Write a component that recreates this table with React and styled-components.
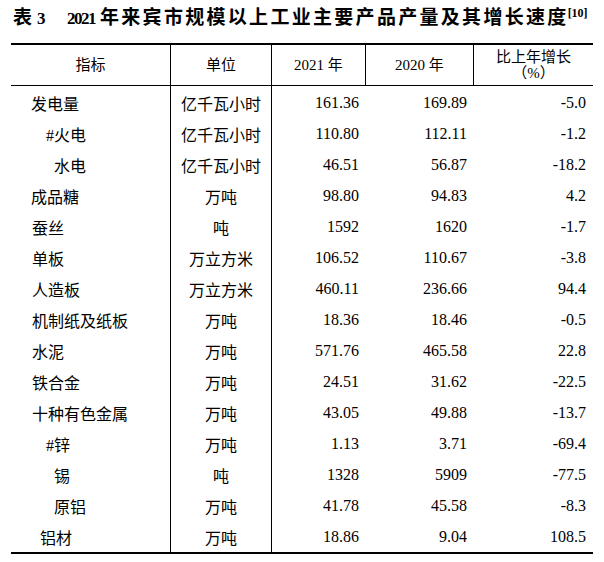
import React from 'react'
import styled, { createGlobalStyle } from 'styled-components'

const GlobalStyle = createGlobalStyle`
  body {
    margin: 0;
    background: #fff;
    color: #000;
  }
`

const COLS = '160px 101px 94px 108px 119px'
const FONT = `"Liberation Serif", "Noto Sans CJK SC", serif`

const Page = styled.div`
  width: 604px;
  height: 562px;
  font-family: ${FONT};
`

const Title = styled.div`
  height: 43px;
  box-sizing: border-box;
  padding: 7px 0 0 13px;
  display: flex;
  align-items: baseline;
  font-weight: bold;
  white-space: nowrap;
  line-height: 22px;
`

const TitleWord = styled.span`
  font-size: 19px;
  letter-spacing: ${p => p.$spacing || 0}px;
  margin-left: ${p => p.$gap || 0}px;
`

const TitleNum = styled.span`
  font-size: 17px;
  letter-spacing: -1.5px;
  margin-left: ${p => p.$gap || 0}px;
`

const Sup = styled.span`
  font-size: 12px;
  position: relative;
  top: -7px;
  margin-left: -1px;
`

const Table = styled.div`
  margin-left: 11px;
  width: 582px;
  border-top: 2px solid #000;
  border-bottom: 2px solid #000;
`

const HeadRow = styled.div`
  display: grid;
  grid-template-columns: ${COLS};
  height: 40px;
  border-bottom: 1px solid #000;
`

const HeadCell = styled.div`
  display: flex;
  flex-direction: column;
  align-items: center;
  justify-content: center;
  font-size: 15px;
  line-height: 16px;
  border-right: ${p => (p.$last ? 'none' : '1px solid #000')};
`

const HeadLine = styled.span`
  display: block;
  font-size: 15px;
  line-height: 16px;
`

const BodyRow = styled.div`
  display: grid;
  grid-template-columns: ${COLS};
  height: 31.07px;
`

const Name = styled.div`
  display: flex;
  align-items: center;
  padding-left: ${p => p.$indent}px;
  font-size: 16px;
  border-right: 1px solid #000;
  padding-top: 2px;
`

const Unit = styled.div`
  display: flex;
  align-items: center;
  justify-content: center;
  font-size: 16px;
  border-right: 1px solid #000;
  padding-top: 2px;
`

const Num = styled.div`
  display: flex;
  align-items: center;
  justify-content: flex-end;
  padding-right: 7px;
  font-size: 16px;
  padding-top: 2px;
`

const rows = [
  ['发电量', 20, '亿千瓦小时', '161.36', '169.89', '-5.0'],
  ['#火电', 35, '亿千瓦小时', '110.80', '112.11', '-1.2'],
  ['水电', 43, '亿千瓦小时', '46.51', '56.87', '-18.2'],
  ['成品糖', 20, '万吨', '98.80', '94.83', '4.2'],
  ['蚕丝', 21, '吨', '1592', '1620', '-1.7'],
  ['单板', 21, '万立方米', '106.52', '110.67', '-3.8'],
  ['人造板', 21, '万立方米', '460.11', '236.66', '94.4'],
  ['机制纸及纸板', 21, '万吨', '18.36', '18.46', '-0.5'],
  ['水泥', 21, '万吨', '571.76', '465.58', '22.8'],
  ['铁合金', 21, '万吨', '24.51', '31.62', '-22.5'],
  ['十种有色金属', 21, '万吨', '43.05', '49.88', '-13.7'],
  ['#锌', 35, '万吨', '1.13', '3.71', '-69.4'],
  ['锡', 43, '吨', '1328', '5909', '-77.5'],
  ['原铝', 43, '万吨', '41.78', '45.58', '-8.3'],
  ['铝材', 29, '万吨', '18.86', '9.04', '108.5'],
]

export default function App() {
  return (
    <Page>
      <GlobalStyle />
      <Title>
        <TitleWord>表</TitleWord>
        <TitleNum $gap={5}>3</TitleNum>
        <TitleNum $gap={23}>2021</TitleNum>
        <TitleWord $gap={5} $spacing={2.3}>年来宾市规模以上工业主要产品产量及其增长速度</TitleWord>
        <Sup>[10]</Sup>
      </Title>
      <Table>
        <HeadRow>
          <HeadCell>指标</HeadCell>
          <HeadCell>单位</HeadCell>
          <HeadCell>2021 年</HeadCell>
          <HeadCell>2020 年</HeadCell>
          <HeadCell $last>
            <HeadLine>比上年增长</HeadLine>
            <HeadLine>（%）</HeadLine>
          </HeadCell>
        </HeadRow>
        {rows.map(([name, indent, unit, a, b, c]) => (
          <BodyRow key={name}>
            <Name $indent={indent}>{name}</Name>
            <Unit>{unit}</Unit>
            <Num>{a}</Num>
            <Num>{b}</Num>
            <Num>{c}</Num>
          </BodyRow>
        ))}
      </Table>
    </Page>
  )
}
